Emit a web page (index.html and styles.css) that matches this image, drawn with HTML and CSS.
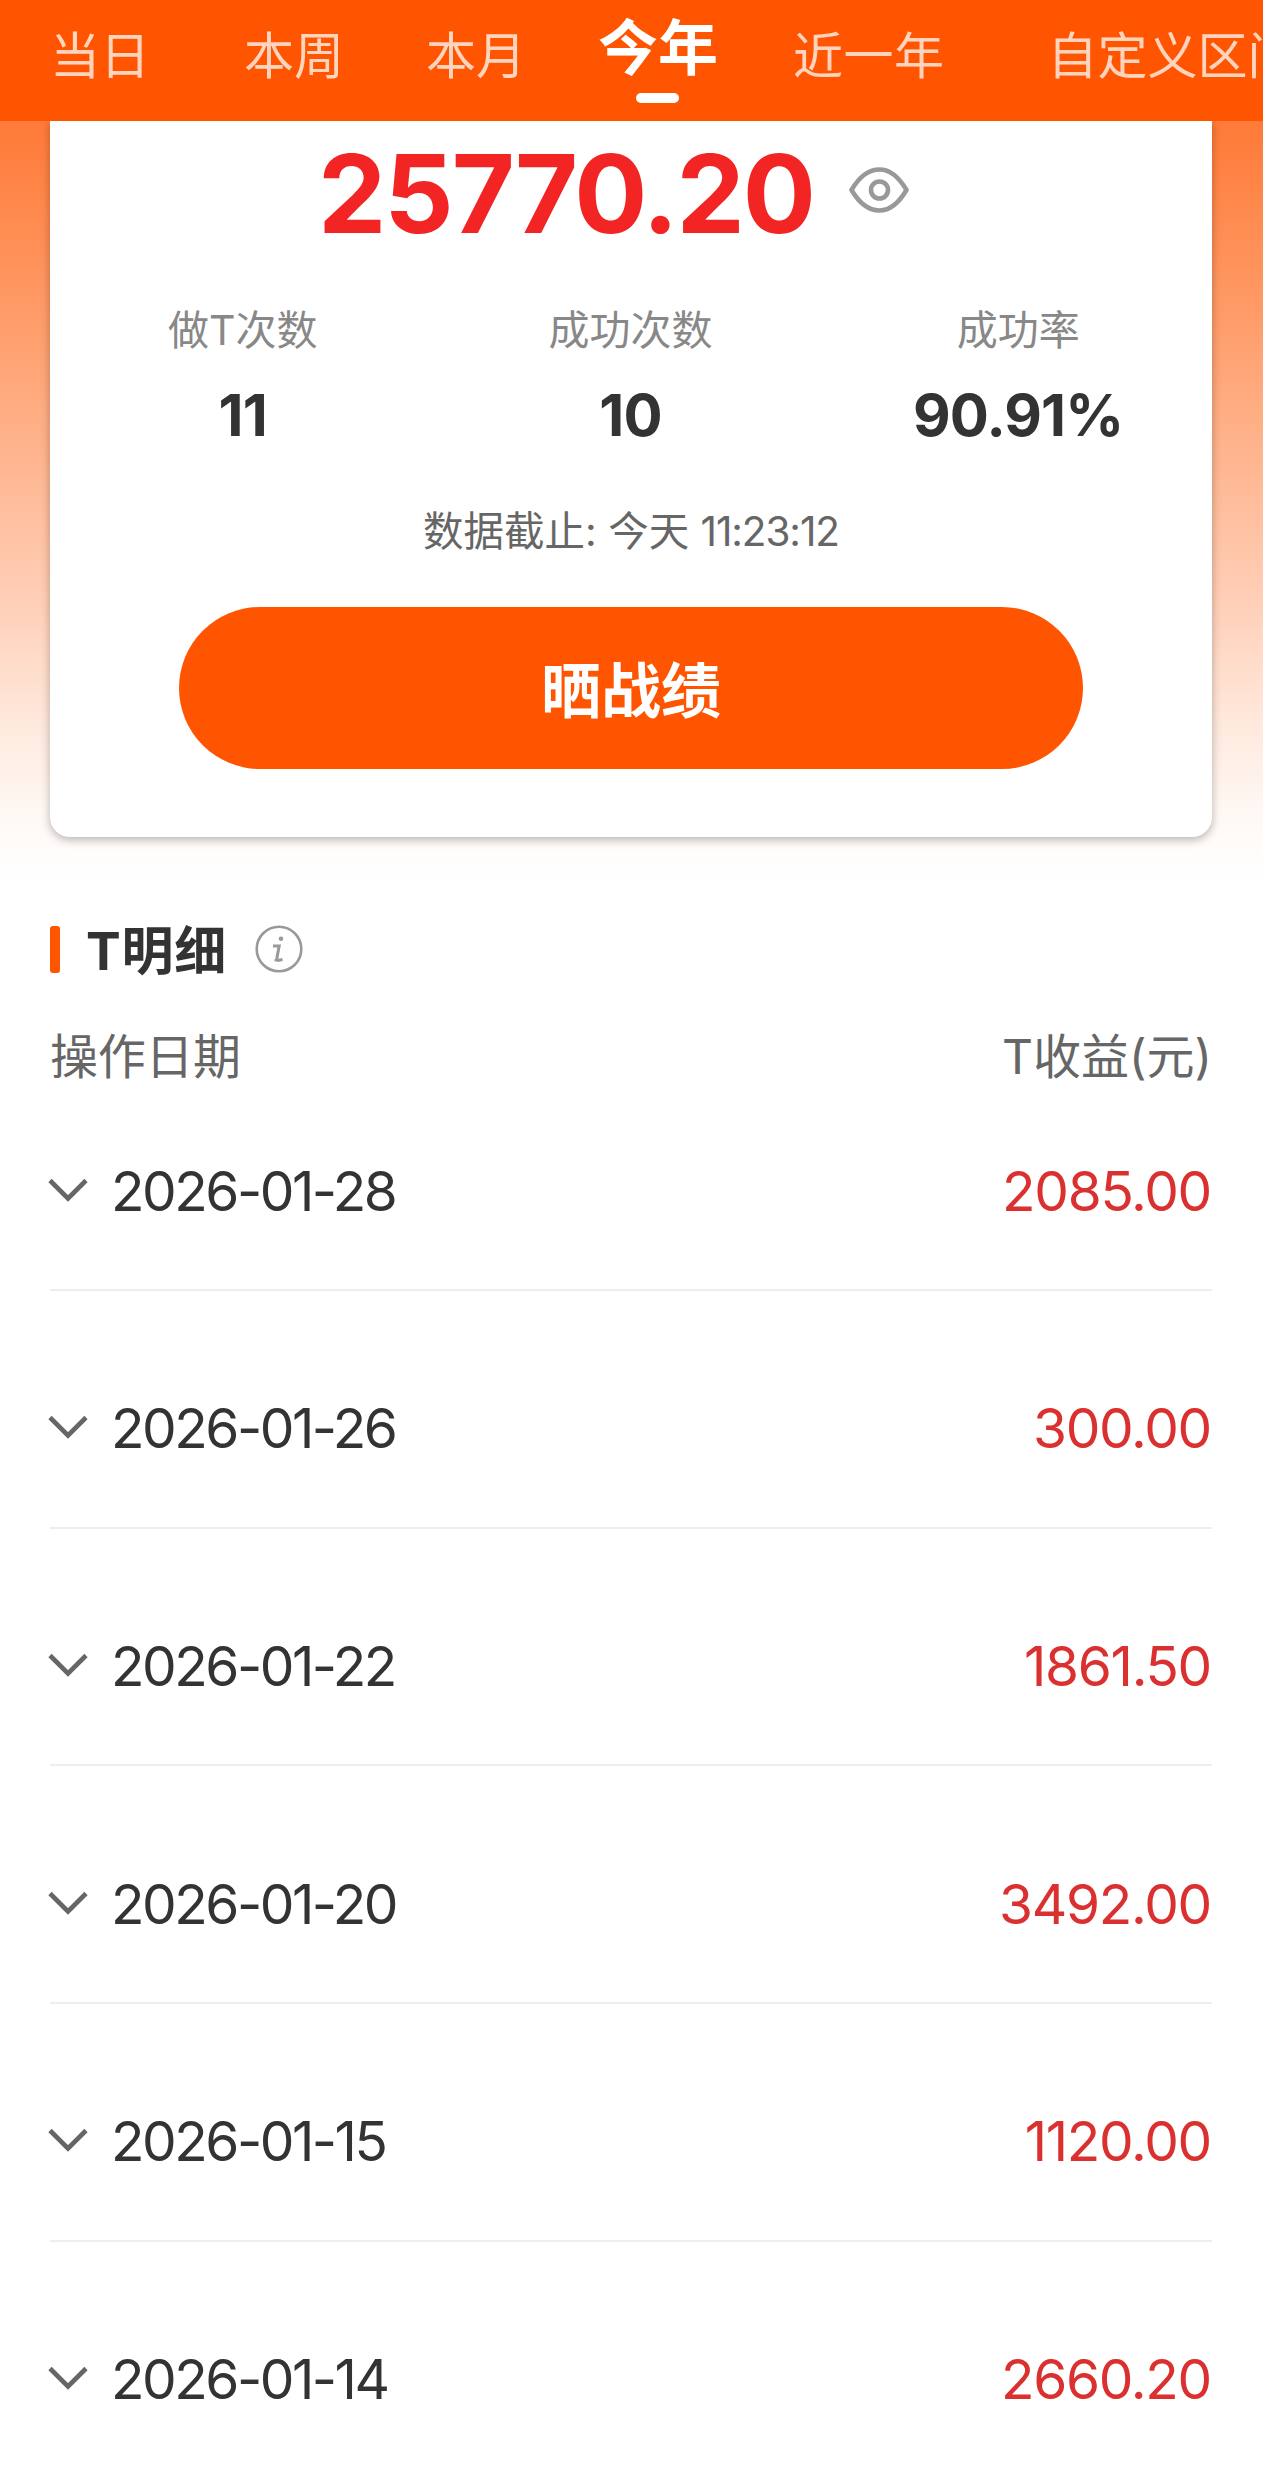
FILE: index.html
```html
<!DOCTYPE html>
<html lang="zh-CN">
<head>
    <meta charset="UTF-8">
    <meta name="viewport" content="width=device-width, initial-scale=1.0">
    <title>T明细</title>
    <link rel="stylesheet" href="styles.css">
</head>
<body>
    <nav class="tabs">
        <span class="tab">当日</span>
        <span class="tab tab-week">本周</span>
        <span class="tab tab-month">本月</span>
        <span class="tab tab-year active">今年</span>
        <span class="tab tab-last">近一年</span>
        <span class="tab tab-custom">自定义区间</span>
    </nav>
    <main class="page">
        <section class="card">
            <div class="total">
                <span class="total-num">25770.20</span>
                <svg class="eye" viewBox="0 0 60 46" fill="none" stroke="#999" stroke-width="4.6">
                    <path d="M2.5 23C9 12 18 2.5 30.5 2.5S51 12 57.5 23C51 34 43 43.5 30.5 43.5S9 34 2.5 23Z" stroke-linejoin="round"/>
                    <circle cx="30.5" cy="23" r="8.5"/>
                </svg>
            </div>
            <div class="stats">
                <div class="stat">
                    <div class="stat-label">做T次数</div>
                    <div class="stat-value">11</div>
                </div>
                <div class="stat">
                    <div class="stat-label">成功次数</div>
                    <div class="stat-value">10</div>
                </div>
                <div class="stat">
                    <div class="stat-label">成功率</div>
                    <div class="stat-value">90.91%</div>
                </div>
            </div>
            <p class="deadline">数据截止: 今天 <span class="time">11:23:12</span></p>
            <button class="btn">晒战绩</button>
        </section>

        <section class="detail">
            <h2 class="title">
                <i class="bar"></i>
                <span class="title-text">T明细</span>
                <svg class="info" viewBox="0 0 48 48" fill="none" stroke="#999">
                    <circle cx="24" cy="24" r="22.3" stroke-width="2.6"/>
                    <circle cx="26" cy="13.8" r="2.3" fill="#999" stroke="none"/>
                    <path d="M18 21H24.2L22 32.5Q21.4 35.5 24 35.2L27.5 34.6" stroke-width="3"/>
                    <path d="M19.5 35.3H24" stroke-width="2.4"/>
                </svg>
            </h2>
            <div class="head">
                <span>操作日期</span>
                <span class="head-right">T收益(元)</span>
            </div>
            <ul class="list">
                <li class="row">
                    <svg class="arrow" viewBox="0 0 40 24"><path d="M2 2.5L20 20.5L38 2.5"/></svg>
                    <span class="date">2026-01-28</span>
                    <span class="amount">2085.00</span>
                </li>
                <li class="row">
                    <svg class="arrow" viewBox="0 0 40 24"><path d="M2 2.5L20 20.5L38 2.5"/></svg>
                    <span class="date">2026-01-26</span>
                    <span class="amount">300.00</span>
                </li>
                <li class="row">
                    <svg class="arrow" viewBox="0 0 40 24"><path d="M2 2.5L20 20.5L38 2.5"/></svg>
                    <span class="date">2026-01-22</span>
                    <span class="amount">1861.50</span>
                </li>
                <li class="row">
                    <svg class="arrow" viewBox="0 0 40 24"><path d="M2 2.5L20 20.5L38 2.5"/></svg>
                    <span class="date">2026-01-20</span>
                    <span class="amount">3492.00</span>
                </li>
                <li class="row">
                    <svg class="arrow" viewBox="0 0 40 24"><path d="M2 2.5L20 20.5L38 2.5"/></svg>
                    <span class="date">2026-01-15</span>
                    <span class="amount">1120.00</span>
                </li>
                <li class="row">
                    <svg class="arrow" viewBox="0 0 40 24"><path d="M2 2.5L20 20.5L38 2.5"/></svg>
                    <span class="date">2026-01-14</span>
                    <span class="amount">2660.20</span>
                </li>
            </ul>
        </section>
    </main>
</body>
</html>
```
FILE: styles.css
```css
:root {
    --orange: #ff5500;
    --red: #db3030;
    --text: #333;
    --gray: #666;
}
* {
    box-sizing: border-box;
    margin: 0;
    padding: 0;
}
body {
    font-family: Inter, "Noto Sans CJK SC", sans-serif;
    background: #fff;
    color: var(--text);
    height: 2471px;
    overflow: hidden;
}
/* Tabs */
.tabs {
    display: flex;
    height: 121px;
    padding-left: 50px;
    background: var(--orange);
    overflow: hidden;
    position: relative;
    z-index: 2;
}
.tab {
    flex: none;
    height: 121px;
    font-size: 50px;
    line-height: 112px;
    color: rgba(255, 255, 255, 0.75);
    white-space: nowrap;
}
.tab-week { margin-left: 94px; }
.tab-month { margin-left: 82px; }
.tab-year { margin-left: 72px; }
.tab-last { margin-left: 75px; letter-spacing: 0.5px; }
.tab-custom { margin-left: 103px; }
.tab.active {
    position: relative;
    font-size: 60px;
    line-height: 97px;
    font-weight: bold;
    color: #fff;
}
.tab.active::after {
    content: "";
    position: absolute;
    left: 50%;
    top: 93px;
    width: 43px;
    height: 10px;
    margin-left: -22px;
    border-radius: 5px;
    background: #fff;
}
/* Summary card */
.page {
    padding: 0 51px 0 50px;
    background: linear-gradient(180deg, #ff7a38 0, #ff925a 139px, #ffcbb0 459px, #ffe8dc 600px, #fff8f4 690px, #fff 760px) no-repeat;
}
.card {
    height: 716px;
    background: #fff;
    border-radius: 0 0 20px 20px;
    box-shadow: 0 3px 10px rgba(0, 0, 0, 0.28);
    text-align: center;
}
.total {
    display: flex;
    align-items: center;
    height: 146px;
    padding-left: 268px;
}
.total-num {
    width: 531px;
    text-align: left;
    font-size: 108.5px;
    font-weight: bold;
    line-height: 148px;
    letter-spacing: -2px;
    color: #f22424;
}
.eye {
    width: 60px;
    height: 46px;
    margin-top: -8px;
}
.stats {
    display: grid;
    grid-template-columns: repeat(3, 1fr);
    margin: 35px 0 0 -1px;
}
.stat-label {
    font-size: 41px;
    line-height: 56px;
    color: #888;
}
.stat-value {
    margin-top: 22px;
    font-size: 58px;
    font-weight: bold;
    line-height: 70px;
    letter-spacing: -0.8px;
}
.deadline {
    margin-top: 52px;
    font-size: 40.5px;
    line-height: 60px;
    color: var(--gray);
}
.time {
    letter-spacing: -1.1px;
}
.btn {
    display: block;
    width: 904px;
    height: 162px;
    margin: 45px auto 0;
    padding-bottom: 4px;
    border: none;
    border-radius: 81px;
    background: var(--orange);
    color: #fff;
    font-family: inherit;
    font-size: 60px;
    font-weight: bold;
}
/* Detail list */
.title {
    display: flex;
    align-items: center;
    height: 60px;
    margin-top: 82px;
    font-size: 52px;
    line-height: 60px;
}
.title-text {
    padding-top: 6px;
    letter-spacing: 0.8px;
}
.bar {
    width: 10px;
    height: 47px;
    margin-right: 26px;
    border-radius: 3px;
    background: var(--orange);
}
.info {
    width: 48px;
    height: 48px;
    margin-left: 28px;
}
.head {
    display: flex;
    justify-content: space-between;
    margin-top: 48px;
    font-size: 48px;
    line-height: 60px;
    letter-spacing: -0.3px;
    color: var(--gray);
}
.head-right {
    letter-spacing: 0;
}
.list {
    list-style: none;
    margin-top: -15px;
}
.row {
    display: flex;
    align-items: center;
    height: 237.7px;
    padding-top: 39px;
    border-bottom: 2px solid #eee;
    font-size: 55px;
}
.row:first-child {
    height: 219px;
    padding-top: 20px;
}
.arrow {
    width: 40px;
    height: 24px;
    margin: -2px 23px 0 -2px;
    fill: none;
    stroke: var(--gray);
    stroke-width: 4.6;
}
.date {
    flex: 1;
    letter-spacing: -2.5px;
}
.amount {
    margin-right: 1px;
    letter-spacing: -1.3px;
    color: var(--red);
}
```
